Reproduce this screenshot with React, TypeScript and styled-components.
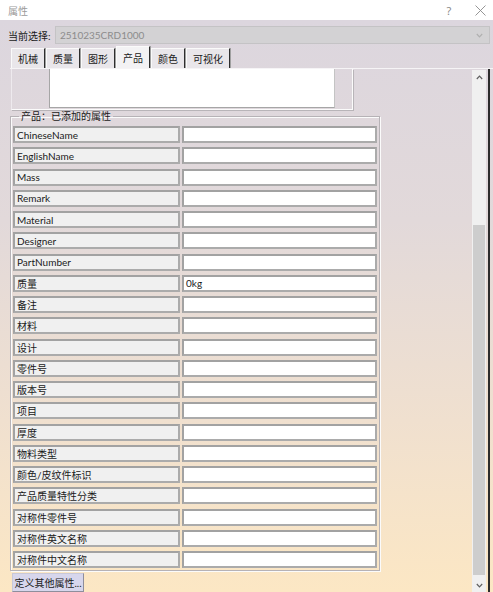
import React from "react";
import styled, { createGlobalStyle } from "styled-components";

const GlobalStyle = createGlobalStyle`
  html, body {
    margin: 0;
    padding: 0;
  }
  body {
    font-family: "Lato", "Noto Sans CJK SC", sans-serif;
    font-size: 10px;
    color: #1a1a1a;
  }
`;

const TABS = ["机械", "质量", "图形", "产品", "颜色", "可视化"];

const ROWS: [string, string][] = [
  ["ChineseName", ""],
  ["EnglishName", ""],
  ["Mass", ""],
  ["Remark", ""],
  ["Material", ""],
  ["Designer", ""],
  ["PartNumber", ""],
  ["质量", "0kg"],
  ["备注", ""],
  ["材料", ""],
  ["设计", ""],
  ["零件号", ""],
  ["版本号", ""],
  ["项目", ""],
  ["厚度", ""],
  ["物料类型", ""],
  ["颜色/皮纹件标识", ""],
  ["产品质量特性分类", ""],
  ["对称件零件号", ""],
  ["对称件英文名称", ""],
  ["对称件中文名称", ""],
];

const Window = styled.div`
  width: 493px;
  height: 592px;
  overflow: hidden;
  display: flex;
  flex-direction: column;
  background: #fff;
`;

const TitleBar = styled.div`
  height: 20px;
  flex: none;
  display: flex;
  align-items: center;
  padding: 0 5px 0 8px;
  color: #9a9a9a;
  font-size: 10px;
`;

const Title = styled.span`
  flex: 1;
`;

const HelpButton = styled.span`
  width: 20px;
  margin-right: 13px;
  text-align: center;
  color: #8a8a8a;
  font-size: 11px;
  font-family: "Noto Sans", sans-serif;
`;

const CloseButton = styled.span`
  width: 16px;
  height: 16px;
  display: flex;
  align-items: center;
  justify-content: center;
`;

const Body = styled.div`
  flex: 1;
  display: flex;
  flex-direction: column;
  background: linear-gradient(180deg, #dcd6de 0%, #e2d9da 35%, #f0e0cf 70%, #fce7c4 100%);
  min-height: 0;
`;

const SelectRow = styled.div`
  display: flex;
  align-items: center;
  margin-top: 6px;
  height: 18px;
  padding: 0 3px 0 8px;
`;

const SelectLabel = styled.span`
  width: 47px;
`;

const Combo = styled.div`
  flex: 1;
  height: 18px;
  box-sizing: border-box;
  display: flex;
  align-items: center;
  padding: 0 6px 0 4px;
  background: #d3d2d4;
  border: 1px solid #c4c3c5;
  color: #8c8c8c;
`;

const ComboText = styled.span`
  flex: 1;
`;

const TabBar = styled.div`
  display: flex;
  align-items: flex-end;
  height: 22px;
  margin-top: 2px;
  padding-left: 11px;
`;

const Tab = styled.div<{ $active?: boolean }>`
  height: ${({ $active }) => ($active ? 22 : 20)}px;
  box-sizing: border-box;
  display: flex;
  align-items: center;
  padding: 0 6px;
  background: ${({ $active }) => ($active ? "#f3f2f4" : "#e9e6ea")};
  border-left: 1px solid #fafafa;
  border-top: 1px solid #fafafa;
  border-right: 1px solid #2e2e2e;
  box-shadow: 1px 0 0 #a0a0a0;
  margin-right: 1px;
`;

const Pane = styled.div`
  flex: 1;
  display: flex;
  min-height: 0;
  border-top: 1px solid #f6f4f6;
  margin-left: 10px;
`;

const Content = styled.div`
  flex: 1;
  display: flex;
  flex-direction: column;
  min-width: 0;
`;

const PrevPanel = styled.div`
  width: 342px;
  height: 41px;
  flex: none;
  box-sizing: border-box;
  display: flex;
  margin-left: 1px;
  padding-left: 37px;
  border-left: 1px solid #eeeaee;
  border-right: 1px solid #fbfbfb;
  border-bottom: 1px solid #fbfbfb;
  box-shadow: 1px 1px 0 #b8b4b8;
`;

const PrevText = styled.div`
  width: 286px;
  height: 39px;
  box-sizing: border-box;
  background: #fff;
  border-left: 1px solid #a6a6a6;
  border-bottom: 1px solid #a6a6a6;
  border-right: 1px solid #c4c4c4;
`;

const Group = styled.fieldset`
  width: 370px;
  box-sizing: border-box;
  margin: 0;
  padding: 3px 2px 2px 2px;
  border: 1px solid #b6b2b6;
  box-shadow: inset 1px 1px 0 #fbfbfb, 1px 1px 0 #fbfbfb;
  min-inline-size: 0;
`;

const Legend = styled.legend`
  padding: 0 2px;
  margin-left: 6px;
  line-height: 13px;
  height: 13px;
`;

const Grid = styled.div`
  display: grid;
  grid-template-columns: 167px 195px;
  grid-auto-rows: 17px;
  column-gap: 2px;
  row-gap: 4.25px;
`;

const Cell = styled.div<{ $label?: boolean }>`
  box-sizing: border-box;
  display: flex;
  align-items: center;
  padding-left: 2px;
  background: ${({ $label }) => ($label ? "#f0f0f0" : "#fff")};
  border: 2px solid #ababab;
  border-top-color: #a2a2a2;
  border-left-color: #a2a2a2;
  white-space: nowrap;
  overflow: hidden;
`;

const Button = styled.div`
  width: 72px;
  height: 20px;
  box-sizing: border-box;
  margin: 2px 0 0 2px;
  display: flex;
  align-items: center;
  justify-content: center;
  background: #d7d6ec;
  border: 1px solid #8e8e9c;
  border-top-color: #c8c8d8;
  border-left-color: #c8c8d8;
`;

const ScrollTrack = styled.div`
  width: 14px;
  flex: none;
  margin-top: 1px;
  display: flex;
  flex-direction: column;
  background: #f0f0f0;
`;

const ScrollArrow = styled.div`
  height: 14px;
  flex: none;
  display: flex;
  align-items: center;
  justify-content: center;
`;

const ScrollSpace = styled.div<{ $h: number }>`
  height: ${({ $h }) => $h}px;
  flex: none;
`;

const ScrollThumb = styled.div`
  flex: 1;
  margin: 0 1px;
  background: #cdcdcd;
`;

const Edge = styled.div`
  width: 2px;
  flex: none;
  margin: 0 3px 0 2px;
  background: #2c2c2c;
`;

const Chevron = ({ up, color = "#606060" }: { up?: boolean; color?: string }) => (
  <svg width="7" height="5" viewBox="0 0 7 5">
    <path
      d={up ? "M0.8 4 L3.5 1.2 L6.2 4" : "M0.8 1 L3.5 3.8 L6.2 1"}
      fill="none"
      stroke={color}
      strokeWidth="1.2"
    />
  </svg>
);

const CloseIcon = () => (
  <svg width="11" height="11" viewBox="0 0 11 11">
    <path d="M0.5 0.5 L10.5 10.5 M10.5 0.5 L0.5 10.5" stroke="#8a8a8a" strokeWidth="0.9" fill="none" />
  </svg>
);

export default function App() {
  return (
    <>
      <GlobalStyle />
      <Window>
        <TitleBar>
          <Title>属性</Title>
          <HelpButton>?</HelpButton>
          <CloseButton>
            <CloseIcon />
          </CloseButton>
        </TitleBar>
        <Body>
          <SelectRow>
            <SelectLabel>当前选择:</SelectLabel>
            <Combo>
              <ComboText>2510235CRD1000</ComboText>
              <Chevron color="#b0b0b0" />
            </Combo>
          </SelectRow>
          <TabBar>
            {TABS.map((t) => (
              <Tab key={t} $active={t === "产品"}>
                {t}
              </Tab>
            ))}
          </TabBar>
          <Pane>
            <Content>
              <PrevPanel>
                <PrevText />
              </PrevPanel>
              <Group>
                <Legend>产品：已添加的属性</Legend>
                <Grid>
                  {ROWS.map(([k, v]) => (
                    <React.Fragment key={k}>
                      <Cell $label>{k}</Cell>
                      <Cell>{v}</Cell>
                    </React.Fragment>
                  ))}
                </Grid>
              </Group>
              <Button>定义其他属性...</Button>
            </Content>
            <ScrollTrack>
              <ScrollArrow>
                <Chevron up />
              </ScrollArrow>
              <ScrollSpace $h={141} />
              <ScrollThumb />
              <ScrollSpace $h={3} />
              <ScrollArrow>
                <Chevron />
              </ScrollArrow>
            </ScrollTrack>
            <Edge />
          </Pane>
        </Body>
      </Window>
    </>
  );
}
